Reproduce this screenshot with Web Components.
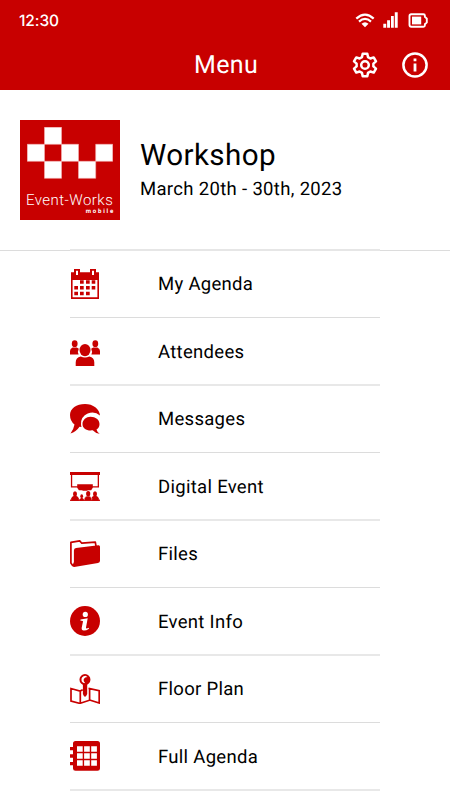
<!DOCTYPE html>
<html lang="en"><head><meta charset="utf-8"><title>Menu</title>
<style>
body{margin:0;background:#fff;font-family:Roboto,sans-serif;color:#000;overflow:hidden;text-rendering:geometricPrecision}
</style></head><body>
<event-app></event-app>
<script>
const RED='#c80000';
const icons={
wifi:['20 15','<g fill="none" stroke="#fff" stroke-width="2.200"><path d="M1.300 5.600Q10 -2.400 18.700 5.600"/><path d="M4 8.600Q10 3.200 16 8.600"/></g><path d="M6.500 10.800Q10 7.800 13.500 10.800L10 14.300Z" fill="#fff"/>'],
signal:['15 16','<path d="M0.3 11.700h2.900v4H.3zM4.100 8.200H7v7.500H4.100zM8 4.100h2.800v11.600H8zM11.800.3h2.900v15.400h-2.900z" fill="#fff"/>'],
battery:['20 15','<path d="M3.200 1.200h12.200q1.500 0 1.500 1.500v1.100l1.900 1.800v3.800l-1.900 1.800v1.100q0 1.500-1.500 1.500H3.200q-1.700 0-1.700-1.700V2.900q0-1.700 1.700-1.700Z" fill="none" stroke="#fff" stroke-width="1.900"/><rect x="4" y="3.600" width="9.200" height="7.800" fill="#fff"/>'],
gear:['26 26','<g fill="none" stroke="#fff" stroke-width="2.500" stroke-linejoin="round"><path d="M10.700 1.700h4.600l.7 3.400 2.400 1.400 3.300-1.100 2.300 4-2.600 2.200v2.800l2.600 2.200-2.300 4-3.300-1.100-2.400 1.400-.7 3.400h-4.600l-.7-3.400-2.400-1.400-3.300 1.100-2.300-4 2.600-2.200v-2.800L2 9.400l2.300-4 3.300 1.100L10 5.100Z"/><circle cx="13" cy="13" r="3.800"/></g>'],
about:['26 26','<circle cx="13" cy="13" r="11.600" fill="none" stroke="#fff" stroke-width="2.500"/><path d="M11.600 6.600h2.800v2.700h-2.800zM11.600 11.500h2.800v8h-2.800z" fill="#fff"/>'],
calendar:['30 30','<path fill="currentColor" fill-rule="evenodd" d="M1 3.300H4V0h6v3.300H20V0h6v3.300h3V30H1ZM2.600 11V28.300H27.400V11ZM6 1.700V6h2V1.700ZM22 1.700V6h2V1.700Z"/><path fill="currentColor" d="M10 11.300h3.700v3.500H10zM16 11.300h3.700v3.500H16zM21.700 11.300h3.600v3.500h-3.600zM4.300 17H8v3.500H4.300zM10 17h3.700v3.500H10zM16 17h3.700v3.500H16zM21.700 17h3.600v3.500h-3.600zM4.300 22.700H8v3.500H4.300zM10 22.700h3.700v3.500H10zM16 22.700h3.700v3.500H16z"/>'],
people:['30 30','<g fill="currentColor" transform="translate(0 .9)"><ellipse cx="4.700" cy="6.800" rx="2.900" ry="3.400"/><ellipse cx="25.300" cy="6.800" rx="2.900" ry="3.400"/><path d="M0 17.500v-3.300q0-2.500 2.600-3.700h4.200q1.500.6 2 1.300-1.500 2.700-.2 5.700ZM30 17.500v-3.300q0-2.500-2.600-3.700h-4.200q-1.500.6-2 1.300 1.500 2.700.2 5.700Z"/><ellipse cx="15" cy="13.200" rx="5.500" ry="6.200"/><path d="M5.700 29v-3.500q0-4.600 5-5.900 4.300 2.200 8.600 0 5 1.300 5 5.900V29Z"/></g>'],
chat:['30 30','<path fill="currentColor" d="M15 0C23 0 29.600 4.800 30 11.600A11.300 11.300 0 0 0 11 20C11 21.200 11.200 22 11.500 23L9.500 22.700Q6 28 .5 29.500Q3.800 25 4.500 20.500Q0 17 0 11C0 4.500 6.500 0 15 0Z"/><path fill="currentColor" d="M20.500 12.700c5 0 9 3.100 9 7.200 0 2.500-1 4.200-3 5.600q.5 2.500 3.200 4.300-4.500-.6-7-3.500c-6 .8-10.200-2-10.200-6.400 0-4 3.700-7.200 8-7.200Z"/>'],
stage:['30 30','<path fill="currentColor" fill-rule="evenodd" d="M0 1h30v3H29V16.600H0.900V4H0ZM2.200 4v11.300H27.700V4Z"/><path fill="currentColor" d="M7.200 13.300H22.800v3.400l-1.600 2.600H18l-1 .5h-4l-1-.5H8.900l-1.700-2.600Z"/><g fill="currentColor"><path d="M1.200 29.800v-2.600q.8-1.700 2.400-2.100h2.800q1.600.4 2.400 2.100v2.600Z"/><path d="M21.200 29.800v-2.600q.8-1.700 2.400-2.100h2.800q1.600.4 2.400 2.100v2.600Z"/><path d="M14.300 29.800v-2.600q.8-1.700 2.400-2.200h2.600q1.600.5 2.400 2.200v2.600Z" stroke="#fff" stroke-width=".6"/><path d="M9.800 29.800v-1.600q.6-1.100 1.300-1.300h1.200q.9.200 1.400 1.300v1.600Z"/></g><g fill="currentColor"><ellipse cx="5" cy="22.900" rx="2" ry="2.700"/><ellipse cx="11.700" cy="25.200" rx="1.400" ry="1.900"/><ellipse cx="18.200" cy="22.800" rx="2.100" ry="2.700"/><ellipse cx="25" cy="22.900" rx="2" ry="2.700"/><path d="M0 28.600h30v1.300H0z"/></g>'],
folder:['30 30','<path fill="none" stroke="currentColor" stroke-width="1.700" stroke-linejoin="round" d="M3 27 .9 24V3.400L9.700 1.900l2.100 2.300 13.500-1.100.7 4"/><path fill="currentColor" d="M3.900 11.600Q3.900 9.500 6 9.100L28.300 6.200Q30 6 30 7.700V21.700q0 1.900-2 2.300L4.200 28Q2.300 28.200 2.800 25.800L3.900 23Z"/>'],
info:['30 30','<circle cx="15" cy="15" r="15" fill="currentColor"/><circle cx="15.300" cy="8.400" r="2.600" fill="#fff"/><path fill="#fff" d="M10.500 13.500 17.700 12.300 16 21.500Q15.800 23.200 18.700 21.700L19 22.700Q16 24.800 13.700 24.600 11.300 24.200 11.700 21.700L13 15.500Q13.200 14.500 10.500 14.800Z"/>'],
map:['30 30','<path fill="none" stroke="currentColor" stroke-width="1.700" d="M12.700 15.700 10 17 1 14.500V27l9.300 2.500V17M10.300 29.200l9.300-3V14.300M18.500 14.300 29.200 16.700V29L19.600 26"/><path fill="currentColor" fill-rule="evenodd" d="M15 .1a5.500 5.500 0 1 1-.1 11 5.500 5.500 0 0 1 .1-11ZM15.500 1.700Q11 2.400 11.500 6.300 11.700 9 15.300 9.300 12.900 6.800 14 4.800 14.800 3.100 17.500 3Z"/><path fill="currentColor" d="M12.900 9.500h4.300V20l-1.300 2.600h-1.800l-1.200-2.600Z"/>'],
book:['30 30','<path fill="currentColor" fill-rule="evenodd" d="M5.500 0H27.500Q30 0 30 2.500v25q0 2.300-2.500 2.300H5.500q-2.500 0-2.500-2.300V24.200H0V21h3v-4.200H0v-3.500h3V9.200H0V6h3V2.500Q3 0 5.500 0ZM7 5.300v5.500h5.700V5.300ZM14.100 5.300v5.500h5.700V5.300ZM21.200 5.300v5.500h5.700V5.300ZM7 12.200v5.600h5.700v-5.600ZM14.100 12.200v5.600h5.700v-5.600ZM21.200 12.200v5.600h5.700v-5.600ZM7 19.200v5.600h5.700v-5.600ZM14.100 19.200v5.600h5.700v-5.600ZM21.200 19.200v5.600h5.700v-5.600Z"/>']
};
class UiIcon extends HTMLElement{
 connectedCallback(){
  const [size,body]=icons[this.getAttribute('name')],[w,h]=size.split(' ');
  this.attachShadow({mode:'open'}).innerHTML=`<style>:host{display:block;flex:none;color:${RED}}svg{display:block}</style><svg width="${w}" height="${h}" viewBox="0 0 ${w} ${h}">${body}</svg>`;
 }
}
customElements.define('ui-icon',UiIcon);
function define(name,html){
 const t=document.createElement('template');t.innerHTML=html;
 customElements.define(name,class extends HTMLElement{
  constructor(){super();this.attachShadow({mode:'open'}).append(t.content.cloneNode(true));}
 });
}
define('status-bar',`<style>
:host{display:flex;height:40px;align-items:center;padding:0 22px 0 19px;box-sizing:border-box;color:#fff;font:500 15.500px Inter,sans-serif}
.t{flex:1;line-height:40px;letter-spacing:-.1px;padding-top:1px}.i{display:flex;gap:8px;align-items:center}
.b{margin-left:2px}</style><span class="t">12:30</span><div class="i"><ui-icon name="wifi"></ui-icon><ui-icon name="signal"></ui-icon><ui-icon class="b" name="battery"></ui-icon></div>`);
define('title-bar',`<style>
:host{display:grid;grid-template-columns:1fr auto 1fr;height:50px;align-items:center;padding:0 22px;color:#fff}
.h{grid-column:2;font-size:25px;line-height:48px;letter-spacing:.35px;padding:1px 0 0 2px}.i{display:flex;justify-content:flex-end;gap:24px}</style><span class="h"><slot></slot></span><div class="i"><ui-icon name="gear"></ui-icon><ui-icon name="about"></ui-icon></div>`);
define('event-logo',`<style>
:host{display:flex;flex-direction:column;width:100px;height:100px;background:${RED};color:#fff;flex:none}
svg{display:block;margin:7px 0 0 7px}.n{font-size:15px;font-weight:300;line-height:16px;margin:12.600px 0 0 6px;letter-spacing:.45px;white-space:nowrap}
.m{font-size:6.100px;font-weight:700;line-height:7px;text-align:right;letter-spacing:1.750px;margin:.6px 5px 0 0}</style>
<svg width="86" height="52" viewBox="0 0 86 52"><path fill="#fff" stroke="#f3b4b4" stroke-width=".6" d="M17.500.3h17v17h-17zM.3 17.300h17.200v17H.3zM34.500 17.300h17v17h-17zM68.700 17.300h17v17h-17zM17.500 34.300h17v17h-17zM51.500 34.300h17.200v17H51.500z"/></svg>
<span class="n">Event-Works</span><span class="m">mobile</span>`);
define('event-header',`<style>
:host{display:flex;align-items:flex-start;padding:30px 20px 0;gap:20px;height:130px;border-bottom:1px solid #dcdcdc}
.t{display:flex;flex-direction:column;padding-top:18px;white-space:nowrap}
.n{font-size:29.600px;line-height:36px;letter-spacing:.4px}.d{font-size:18.500px;line-height:30px;letter-spacing:.330px}</style>
<event-logo></event-logo><div class="t"><span class="n"><slot name="title"></slot></span><span class="d"><slot name="date"></slot></span></div>`);
class MenuRow extends HTMLElement{
 connectedCallback(){
  this.attachShadow({mode:'open'}).innerHTML=`<style>
:host{display:flex;height:66px;align-items:center;gap:58px;border-bottom:1px solid #dcdcdc}
:host(:nth-child(even)){border-bottom:2px solid #e8e8e8}
:host(:nth-child(even)) span{padding-top:1px}
span{font-size:18.500px;line-height:24px;letter-spacing:.300px}</style><ui-icon name="${this.getAttribute('icon')}"></ui-icon><span><slot></slot></span>`;
 }
}
customElements.define('menu-row',MenuRow);
define('menu-list',`<style>:host{display:block;margin:-2px 70px 0;border-top:2px solid #e6e6e6}</style><slot></slot>`);
define('event-app',`<style>:host{display:block;width:450px;height:800px;overflow:hidden}header{background:${RED};height:90px}</style>
<header><status-bar></status-bar><title-bar>Menu</title-bar></header>
<event-header><span slot="title">Workshop</span><span slot="date">March 20th - 30th, 2023</span></event-header>
<menu-list>
<menu-row icon="calendar">My Agenda</menu-row><menu-row icon="people">Attendees</menu-row>
<menu-row icon="chat">Messages</menu-row><menu-row icon="stage">Digital Event</menu-row>
<menu-row icon="folder">Files</menu-row><menu-row icon="info">Event Info</menu-row>
<menu-row icon="map">Floor Plan</menu-row><menu-row icon="book">Full Agenda</menu-row>
</menu-list>`);
</script></body></html>
